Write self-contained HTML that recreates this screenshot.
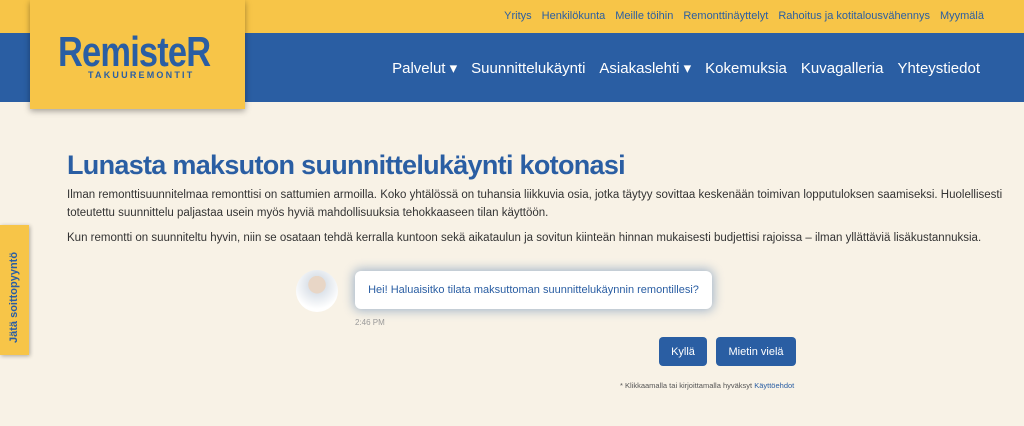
<!DOCTYPE html><html><head><style>
body{margin:0;width:1024px;height:426px;background:#f8f2e6;font-family:"Liberation Sans",sans-serif;position:relative;overflow:hidden}
.top{position:absolute;left:0;top:0;width:1024px;height:33px;background:#f7c548}
.blue{position:absolute;left:0;top:33px;width:1024px;height:69px;background:#2a5ea3}
.toplinks{position:absolute;right:40px;top:10px;font-size:11px;color:#2a5ea3;word-spacing:0}
.toplinks span{margin-left:10px}
.logo{position:absolute;left:30px;top:0;width:215px;height:109px;background:#f7c548;box-shadow:0 2px 6px rgba(0,0,0,.35)}
.logo .n{position:absolute;left:28px;top:28px;font-size:42px;font-weight:bold;color:#2a5ea3;letter-spacing:-1px;transform:scaleX(.82);transform-origin:left}
.logo .s{position:absolute;left:58px;top:70px;font-size:9px;font-weight:bold;color:#2a5ea3;letter-spacing:2.2px}
.nav{position:absolute;right:44px;top:59px;color:#fff;font-size:15px}
.nav span{margin-left:14px}
h1{position:absolute;left:67px;top:150px;margin:0;font-size:27px;color:#2a5ea3;font-weight:bold;letter-spacing:-.7px}
p{position:absolute;left:67px;margin:0;font-size:11.5px;color:#333;line-height:18px;width:950px}
.tab{position:absolute;left:0;top:225px;width:29px;height:130px;background:#f7c548;box-shadow:1px 1px 4px rgba(0,0,0,.3)}
.tab div{position:absolute;left:8px;top:118px;transform:rotate(-90deg);transform-origin:left top;font-size:11px;font-weight:bold;color:#2a5ea3;white-space:nowrap}
.av{position:absolute;left:296px;top:270px;width:42px;height:42px;border-radius:50%;background:radial-gradient(circle at 50% 35%,#e8d6c6 0 25%,#dde3ea 26%,#fff 70%)}
.bub{position:absolute;left:355px;top:271px;width:357px;height:38px;background:#fff;border-radius:6px;box-shadow:0 0 10px 2px rgba(42,94,163,.4);color:#2a5ea3;font-size:11px;line-height:38px;text-align:center}
.tm{position:absolute;left:355px;top:318px;font-size:8px;color:#999}
.btn{position:absolute;top:337px;height:29px;background:#2a5ea3;color:#fff;font-size:11px;border-radius:4px;text-align:center;line-height:31px}
.note{position:absolute;left:620px;top:381px;font-size:7.5px;color:#555}
</style></head><body>
<div class="top"></div><div class="blue"></div>
<div class="toplinks"><span>Yritys</span><span>Henkilökunta</span><span>Meille töihin</span><span>Remonttinäyttelyt</span><span>Rahoitus ja kotitalousvähennys</span><span>Myymälä</span></div>
<div class="logo"><div class="n">RemisteR</div><div class="s">TAKUUREMONTIT</div></div>
<div class="nav"><span>Palvelut ▾</span><span>Suunnittelukäynti</span><span>Asiakaslehti ▾</span><span>Kokemuksia</span><span>Kuvagalleria</span><span>Yhteystiedot</span></div>
<h1>Lunasta maksuton suunnittelukäynti kotonasi</h1>
<p style="top:186px">Ilman remonttisuunnitelmaa remonttisi on sattumien armoilla. Koko yhtälössä on tuhansia liikkuvia osia, jotka täytyy sovittaa keskenään toimivan lopputuloksen saamiseksi. Huolellisesti toteutettu suunnittelu paljastaa usein myös hyviä mahdollisuuksia tehokkaaseen tilan käyttöön.</p>
<p style="top:229px">Kun remontti on suunniteltu hyvin, niin se osataan tehdä kerralla kuntoon sekä aikataulun ja sovitun kiinteän hinnan mukaisesti budjettisi rajoissa – ilman yllättäviä lisäkustannuksia.</p>
<div class="tab"><div>Jätä soittopyyntö</div></div>
<div class="av"></div>
<div class="bub">Hei! Haluaisitko tilata maksuttoman suunnittelukäynnin remontillesi?</div>
<div class="tm">2:46 PM</div>
<div class="btn" style="left:659px;width:48px">Kyllä</div>
<div class="btn" style="left:716px;width:80px">Mietin vielä</div>
<div class="note">* Klikkaamalla tai kirjoittamalla hyväksyt <span style="color:#2a5ea3">Käyttöehdot</span></div>
</body></html>
